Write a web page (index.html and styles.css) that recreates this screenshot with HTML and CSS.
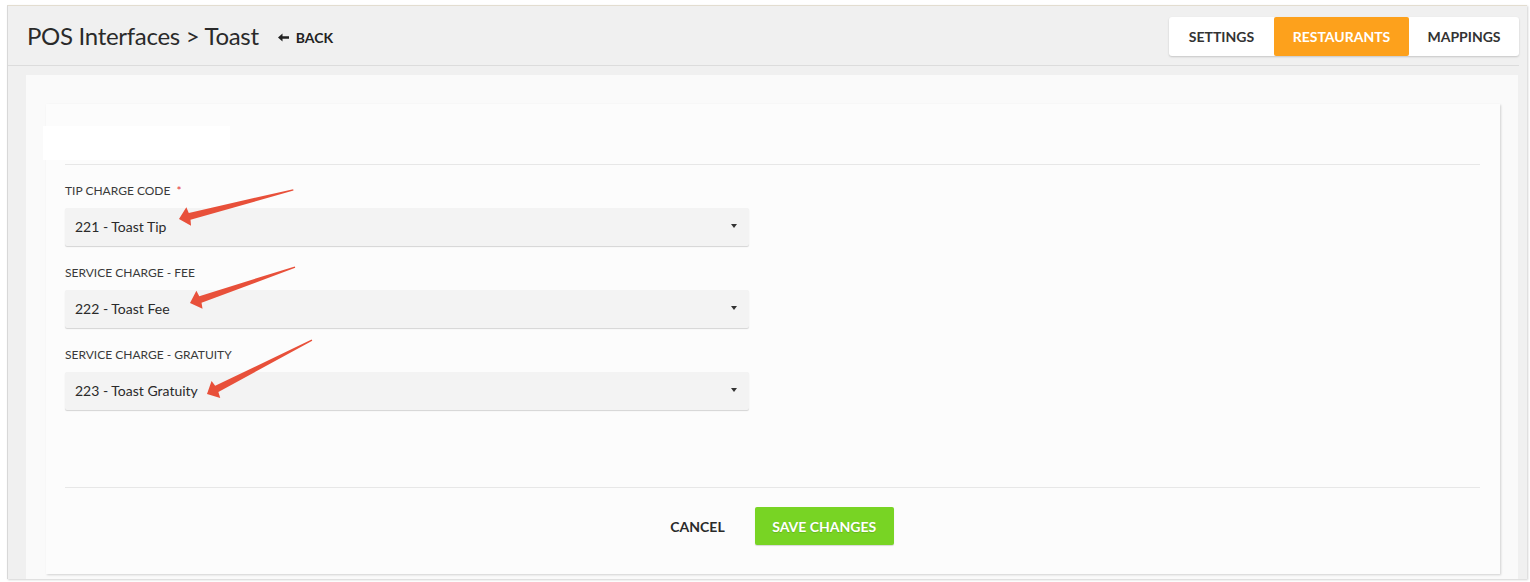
FILE: index.html
```html
<!DOCTYPE html>
<html lang="en">
<head>
<meta charset="utf-8">
<title>POS Interfaces &gt; Toast</title>
<link rel="stylesheet" href="styles.css">
</head>
<body>
<div class="frame">
  <header class="topbar">
    <div class="crumbs">
      <h1 class="title">POS Interfaces &gt; Toast</h1>
      <a class="back" href="#">
        <svg class="back-icon" width="11" height="9" viewBox="0 0 11 9"><path d="M0 4.5 L4.5 0.5 L4.5 3.3 L11 3.3 L11 5.7 L4.5 5.7 L4.5 8.5 Z" fill="#222"/></svg>
        <span>BACK</span>
      </a>
    </div>
    <nav class="tabs">
      <a class="tab" href="#">SETTINGS</a>
      <a class="tab active" href="#">RESTAURANTS</a>
      <a class="tab" href="#">MAPPINGS</a>
    </nav>
  </header>
  <main class="panel">
    <section class="card">
      <div class="card-tab"></div>
      <div class="rule"></div>
      <div class="fields">
        <div class="field">
          <label class="label">TIP CHARGE CODE <span class="req">*</span></label>
          <div class="select"><span>221 - Toast Tip</span><i class="caret"></i></div>
        </div>
        <div class="field">
          <label class="label">SERVICE CHARGE - FEE</label>
          <div class="select"><span>222 - Toast Fee</span><i class="caret"></i></div>
        </div>
        <div class="field">
          <label class="label">SERVICE CHARGE - GRATUITY</label>
          <div class="select"><span>223 - Toast Gratuity</span><i class="caret"></i></div>
        </div>
      </div>
      <div class="rule footer-rule"></div>
      <div class="actions">
        <button class="btn-cancel" type="button">CANCEL</button>
        <button class="btn-save" type="button">SAVE CHANGES</button>
      </div>
    </section>
  </main>
</div>
<svg class="annotations" width="1530" height="582" viewBox="0 0 1530 582">
  <g fill="#e8503a">
    <polygon transform="translate(179 219) rotate(-14.3)" points="0,0 10,-9.5 11,-3.5 118,-0.7 118,0.7 11,3.5 10,9.5"/>
    <polygon transform="translate(190 303) rotate(-18.9)" points="0,0 10,-9.5 11,-3.5 111,-0.7 111,0.7 11,3.5 10,9.5"/>
    <polygon transform="translate(207 394) rotate(-27.2)" points="0,0 10,-9.5 11,-3.5 118,-0.7 118,0.7 11,3.5 10,9.5"/>
  </g>
</svg>
</body>
</html>
```
FILE: styles.css
```css
html, body {
  margin: 0;
  padding: 0;
  background: #ffffff;
}
body {
  position: relative;
  width: 1530px;
  height: 582px;
  overflow: hidden;
  font-family: "Lato", "Open Sans", sans-serif;
  color: #333;
}
.frame {
  margin: 5px 3px 0 7px;
  height: 574px;
  box-sizing: border-box;
  background: #f0f0f0;
  border-top: 1px solid #e3ddd0;
  border-left: 1px solid #d8d8d8;
  box-shadow: 1px 1px 2px rgba(0,0,0,0.18);
  padding-right: 8px;
  display: flex;
  flex-direction: column;
}
.topbar {
  height: 59px;
  border-bottom: 1px solid #dcdcdc;
  display: flex;
  align-items: center;
  justify-content: space-between;
  padding-left: 19px;
  flex: none;
}
.crumbs {
  display: flex;
  align-items: center;
}
.title {
  margin: 0;
  font-weight: 400;
  font-size: 24px;
  color: #2a2a2a;
  letter-spacing: -0.3px;
}
.back {
  display: flex;
  align-items: center;
  gap: 7px;
  margin-left: 19px;
  margin-top: 3px;
  font-size: 14px;
  font-weight: 700;
  color: #222;
  text-decoration: none;
}
.tabs {
  display: flex;
  height: 39px;
  margin-top: 1px;
  background: #fff;
  border-radius: 3px;
  box-shadow: 0 1px 2px rgba(0,0,0,0.18);
}
.tab {
  display: flex;
  align-items: center;
  justify-content: center;
  font-size: 14px;
  font-weight: 700;
  color: #333;
  text-decoration: none;
}
.tab:nth-child(1) { width: 105px; }
.tab:nth-child(2) { width: 135px; }
.tab:nth-child(3) { width: 110px; }
.tab.active {
  background: #fda11c;
  color: #fff;
  border-radius: 2px;
}
.panel {
  flex: 1;
  margin: 9px 1px 0 18px;
  background: #fafafa;
  padding: 29px 18px 0 20px;
  display: flex;
  flex-direction: column;
}
.card {
  background: #fcfcfc;
  box-shadow: 1px 1px 2px rgba(0,0,0,0.16);
  padding: 22px 20px 29px 19px;
  height: 470px;
  box-sizing: border-box;
}
.card-tab {
  width: 187px;
  height: 34px;
  margin-left: -22px;
  background: #ffffff;
}
.rule {
  height: 1px;
  background: #e7e7e7;
  margin-top: 4px;
}
.fields {
  padding-top: 17px;
}
.field {
  margin-bottom: 18px;
}
.field:last-child {
  margin-bottom: 0;
}
.label {
  display: block;
  font-size: 12px;
  line-height: 16px;
  color: #3a3a3a;
  margin-bottom: 10px;
  padding-top: 1px;
  height: 15px;
}
.req {
  color: #e53935;
  margin-left: 3px;
}
.select {
  width: 684px;
  height: 38px;
  box-sizing: border-box;
  background: #f3f3f3;
  border-radius: 2px;
  box-shadow: 0 1px 1px rgba(0,0,0,0.16);
  display: flex;
  align-items: center;
  justify-content: space-between;
  padding: 0 12px 2px 10px;
  font-size: 14px;
  color: #2a2a2a;
}
.caret {
  width: 0;
  height: 0;
  border-left: 3px solid transparent;
  border-right: 3px solid transparent;
  border-top: 4px solid #333;
}
.footer-rule {
  margin-top: 77px;
}
.actions {
  display: flex;
  justify-content: center;
  align-items: center;
  padding-top: 19px;
  padding-left: 4px;
}
.btn-cancel {
  height: 38px;
  padding: 0 15px;
  margin-right: 15px;
  border: 0;
  background: transparent;
  font-family: inherit;
  font-size: 14px;
  font-weight: 700;
  color: #2a2a2a;
}
.btn-save {
  width: 139px;
  height: 38px;
  border: 0;
  border-radius: 2px;
  background: #78d424;
  box-shadow: 0 1px 1px rgba(0,0,0,0.15);
  font-family: inherit;
  font-size: 14px;
  font-weight: 700;
  color: #fff;
  text-shadow: 0 1px 1px rgba(0,0,0,0.15);
}
.annotations {
  position: absolute;
  left: 0;
  top: 0;
  pointer-events: none;
}
```
